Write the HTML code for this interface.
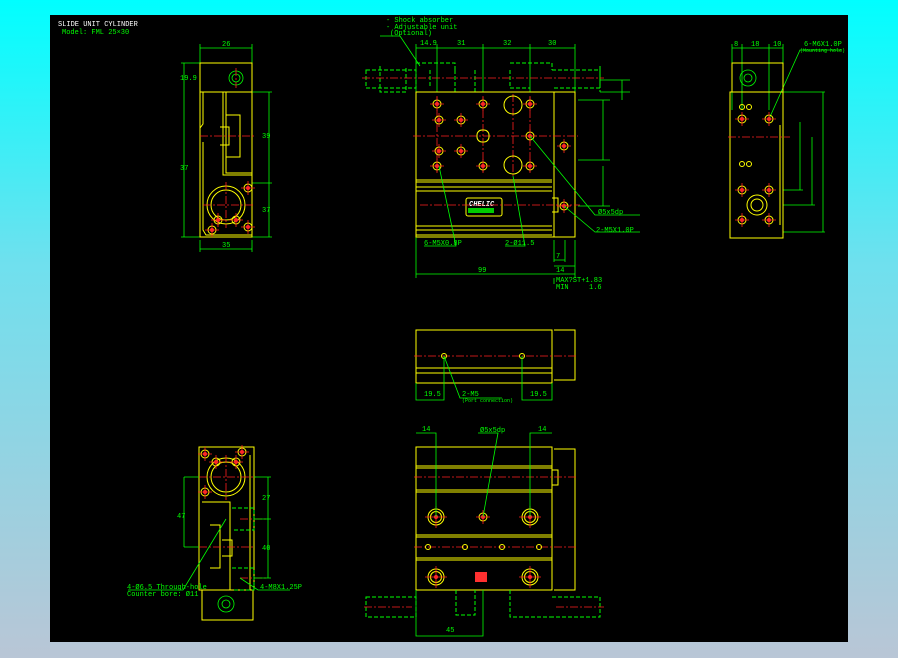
<!DOCTYPE html>
<html><head><meta charset="utf-8"><style>
html,body{margin:0;padding:0;width:898px;height:658px;overflow:hidden;background:linear-gradient(#00ffff 0%,#6fe0ee 40%,#b9c6d6 100%)}
svg{position:absolute;left:0;top:0}
text{font-family:"Liberation Mono",monospace;font-size:7px;fill:#00ff00}
.y{stroke:#ffff00;fill:none;stroke-width:1}
.g{stroke:#00ff00;fill:none;stroke-width:.8}
.r{stroke:#ff2020;fill:none;stroke-width:.8;stroke-dasharray:8 2 2 2}
.d{stroke:#00ff00;fill:none;stroke-width:1;stroke-dasharray:4 2}
</style></head><body>
<svg width="898" height="658" viewBox="0 0 898 658">
<defs>
<g id="h"><circle r="4" class="y"/><circle r="2" fill="#ff3030"/><path d="M-7 0H7M0-7V7" stroke="#ff2020" stroke-width=".8"/></g>
<g id="hb"><circle r="8" class="y"/><circle r="5.5" class="y"/><circle r="2" fill="#ff3030"/><path d="M-11 0H11M0-11V11" stroke="#ff2020" stroke-width=".8"/></g>
<g id="hs"><circle r="2.5" class="y" fill="#ff8020"/></g>
</defs>
<rect x="50" y="15" width="798" height="627" fill="#000"/>
<text x="58" y="26" style="fill:#fff">SLIDE UNIT CYLINDER</text>
<text x="62" y="34">Model: FML 25×30</text>

<!-- left view -->
<path class="g" d="M200 48H252M200 44V63M252 44V63M184 63V237M181 63H200M181 237H200M269 92V237M252 92H272M252 183H272M252 237H272M200 249H252M200 240V252M252 240V252"/>
<text x="222" y="46">26</text><text x="222" y="247">35</text><text x="180" y="80">19.9</text><text x="180" y="170">37</text><text x="262" y="138">39</text><text x="262" y="212">37</text>
<rect class="y" x="200" y="63" width="52" height="29"/>
<path class="y" d="M200 92V237H252V92M203 92V124L200 128M203 142V230L206 235H252M223 92V175H252M226 92V173H252M226 115H240V157H226M220 127H229V145H220"/>
<circle class="g" cx="236" cy="78" r="7"/><circle class="g" cx="236" cy="78" r="4"/>
<circle class="y" cx="226" cy="205" r="19"/><circle class="y" cx="226" cy="205" r="15"/>
<path class="r" d="M200 136H256M203 205H254M236 68V88M226 182V228"/>
<use href="#h" x="248" y="188"/><use href="#h" x="248" y="227"/><use href="#h" x="212" y="230"/><use href="#h" x="218" y="220"/><use href="#h" x="236" y="220"/>

<!-- front view -->
<path class="g" d="M416 48H575M416 44V92M437 44V92M483 44V92M530 44V92M575 44V92M416 274H575M416 237V278M575 240V278M554 240V262M565 240V262M554 260H565M554 266H575M554 278V284M600 80H630M622 80V100M600 92H630M603 100V160M578 100H610M578 160H610M603 166V206M578 206H610"/>
<text x="420" y="45">14.9</text><text x="457" y="45">31</text><text x="503" y="45">32</text><text x="548" y="45">30</text>
<text x="478" y="272">99</text><text x="556" y="258">7</text><text x="556" y="272">14</text>
<text x="556" y="282">MAX?ST+1.83</text><text x="556" y="289">MIN</text><text x="589" y="289">1.6</text>
<text x="386" y="22">- Shock absorber</text><text x="386" y="29">- Adjustable unit</text><text x="390" y="35">(Optional)</text>
<path class="g" d="M380 36H400L420 66"/>
<path class="d" d="M366 70H416V88H366ZM380 66V92H406V66M416 63H455V70M430 70V88M455 70V92H475V70M510 63H552V70M510 70V88H530M552 70H600V88H552M600 66V92"/>
<rect class="y" x="416" y="92" width="138" height="145"/>
<path class="y" d="M554 92H575V237H554M416 180H552M416 182H552M416 187H552M416 191H552M416 226H552M416 230H552M416 235H552M552 198H558V212H552"/>
<rect class="y" x="466" y="198" width="36" height="18" rx="2"/>
<text x="469" y="206" style="fill:#fff;font-style:italic;font-weight:bold">CHELIC</text>
<rect x="468" y="208" width="26" height="5" fill="#00cc00"/>
<path class="r" d="M362 78H604M413 136H578M420 205H580M437 96V172M483 96V172M530 96V172M513 94V176"/>
<use href="#h" x="437" y="104"/><use href="#h" x="483" y="104"/><use href="#h" x="530" y="104"/>
<use href="#h" x="439" y="120"/><use href="#h" x="461" y="120"/><use href="#h" x="439" y="151"/><use href="#h" x="461" y="151"/>
<use href="#h" x="437" y="166"/><use href="#h" x="483" y="166"/><use href="#h" x="530" y="166"/>
<use href="#h" x="530" y="136"/><use href="#h" x="564" y="146"/><use href="#h" x="564" y="206"/>
<circle class="y" cx="513" cy="105" r="9"/><circle class="y" cx="513" cy="165" r="9"/>
<rect class="y" x="477" y="130" width="12" height="12" rx="5"/>
<path class="g" d="M439 166L456 246H424M513 176L525 246H505M530 136L595 215H640M564 206L595 232H640"/>
<text x="424" y="245">6-M5X0.8P</text><text x="505" y="245">2-Ø11.5</text><text x="598" y="214">Ø5x5dp</text><text x="596" y="232">2-M5X1.0P</text>

<!-- right view -->
<path class="g" d="M732 48H783M732 44V110M742 44V110M769 44V110M783 44V63M783 92H825M800 122V190M812 137V205M823 92V232M783 232H825M783 190H803M783 205H815"/>
<text x="734" y="46">8</text><text x="751" y="46">18</text><text x="773" y="46">10</text><text x="804" y="46">6-M6X1.0P</text><text x="800" y="52" style="font-size:5px">(Mounting hole)</text>
<path class="g" d="M769 119L800 50H842"/>
<rect class="y" x="732" y="63" width="51" height="29"/>
<path class="y" d="M730 92V238H783V92ZM780 125V225"/>
<circle class="g" cx="748" cy="78" r="8"/><circle class="g" cx="748" cy="78" r="4"/>
<path class="r" d="M728 137H790"/>
<use href="#hs" x="742" y="107"/><use href="#hs" x="749" y="107"/><use href="#h" x="742" y="119"/><use href="#h" x="769" y="119"/>
<use href="#hs" x="742" y="164"/><use href="#hs" x="749" y="164"/><use href="#h" x="742" y="190"/><use href="#h" x="769" y="190"/>
<use href="#h" x="742" y="220"/><use href="#h" x="769" y="220"/>
<circle class="y" cx="757" cy="205" r="10"/><circle class="y" cx="757" cy="205" r="6"/>

<!-- top middle view -->
<path class="y" d="M416 330H552V383H416ZM416 368H552M416 373H552M554 330H575V380H554"/>
<path class="r" d="M414 356H578"/>
<use href="#hs" x="444" y="356"/><use href="#hs" x="522" y="356"/>
<path class="g" d="M416 383V400H444V356M522 356V400H552V383M444 356L460 398H502"/>
<text x="424" y="396">19.5</text><text x="530" y="396">19.5</text><text x="462" y="396">2-M5</text><text x="462" y="402" style="font-size:5px">(Port connection)</text>

<!-- bottom view -->
<rect class="y" x="416" y="447" width="136" height="143"/>
<path class="y" d="M416 466H552M416 468H552M416 490H552M416 492H552M416 535H552M416 537H552M416 558H552M416 560H552M554 449H575V590H554M552 470H558V485H552"/>
<path class="r" d="M414 477H578M414 547H578"/>
<use href="#hb" x="436" y="517"/><use href="#hb" x="530" y="517"/><use href="#hb" x="436" y="577"/><use href="#hb" x="530" y="577"/>
<use href="#h" x="483" y="517"/>
<use href="#hs" x="428" y="547"/><use href="#hs" x="465" y="547"/><use href="#hs" x="502" y="547"/><use href="#hs" x="539" y="547"/>
<path class="g" d="M416 433H436V517M530 517V433H552M483 517L498 433H478M416 590V636H483V590"/>
<text x="422" y="431">14</text><text x="538" y="431">14</text><text x="480" y="432">Ø5x5dp</text><text x="446" y="632">45</text>
<path class="d" d="M366 597H416V617H366ZM456 590V615H475V590M510 590V617H552M552 597H600V617H552"/>
<path class="r" d="M364 607H412M556 607H604"/>
<rect x="475" y="572" width="12" height="10" fill="#ff3030"/>

<!-- bottom-left view -->
<path class="y" d="M199 447H254V590H199ZM202 590V620H253V590M202 502H230V590M230 510V590M210 525H220V568H210M222 540H232V556H222M250 455V590"/>
<circle class="y" cx="226" cy="477" r="19"/><circle class="y" cx="226" cy="477" r="15"/>
<circle class="g" cx="226" cy="604" r="8"/><circle class="g" cx="226" cy="604" r="4"/>
<path class="d" d="M232 508H254V530H232M232 568H254V590H232"/>
<path class="r" d="M199 477H256M199 547H254M226 455V500M240 519H268M240 578H268"/>
<use href="#h" x="205" y="454"/><use href="#h" x="242" y="452"/><use href="#h" x="216" y="462"/><use href="#h" x="236" y="462"/><use href="#h" x="205" y="492"/>
<path class="g" d="M184 477V547M184 477H199M184 547H199M268 477V578M254 477H271M254 519H271M254 578H271M226 519L183 590H128M240 578L258 590H290"/>
<text x="177" y="518">47</text><text x="262" y="500">27</text><text x="262" y="550">40</text>
<text x="127" y="589">4-Ø6.5 Through-hole</text><text x="127" y="596">Counter bore: Ø11</text><text x="260" y="589">4-M8X1.25P</text>
</svg>
</body></html>
